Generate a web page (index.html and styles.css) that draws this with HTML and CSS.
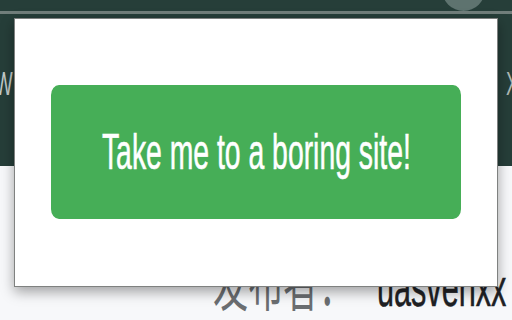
FILE: index.html
```html
<!DOCTYPE html>
<html lang="zh">
<head>
<meta charset="utf-8">
<title>Boring site</title>
<link rel="stylesheet" href="styles.css">
</head>
<body>
<div class="page">
  <header class="header">
    <div class="topbar"><span class="avatar"></span></div>
    <div class="rule"></div>
    <nav class="nav">
      <span class="nav-left">W</span>
      <span class="nav-right">X</span>
    </nav>
  </header>
  <main class="content">
    <div class="meta">
      <span class="meta-label">发布者：</span>
      <span class="meta-value">uasvenxx</span>
    </div>
  </main>
  <div class="popup">
    <button class="boring-btn"><span class="btn-text">Take me to a boring site!</span></button>
  </div>
</div>
</body>
</html>
```
FILE: styles.css
```css
html, body {
  margin: 0;
  padding: 0;
}
body {
  width: 512px;
  height: 320px;
  overflow: hidden;
  background: #f7f8fa;
  font-family: "Liberation Sans", Arial, sans-serif;
}
.page {
  position: relative;
  width: 512px;
  height: 320px;
  overflow: hidden;
}
.header {
  height: 166px;
  background: #263e39;
}
.topbar {
  height: 11px;
  display: flex;
  justify-content: flex-end;
}
.avatar {
  width: 43px;
  height: 43px;
  margin-top: -32px;
  margin-right: 27px;
  border-radius: 50%;
  background: #5e736f;
  flex: none;
}
.rule {
  height: 3px;
  background: #717e7b;
}
.nav {
  display: flex;
  margin-top: 53px;
  font-size: 33px;
  line-height: 33px;
  color: #c3cac8;
}
.nav-left {
  margin-left: -5px;
  transform: scaleX(0.567);
  transform-origin: left center;
  flex: none;
}
.nav-right {
  margin-left: auto;
  margin-right: -16px;
  width: 22px;
  transform: scaleX(0.567);
  transform-origin: left center;
  flex: none;
  color: #aeb7b4;
}
.content {
  height: 154px;
}
.meta {
  display: flex;
  align-items: baseline;
  margin-top: 82px;
  padding-left: 213px;
  white-space: nowrap;
}
.meta-label {
  flex: none;
  width: 164px;
  font-family: "Noto Sans CJK SC", "Liberation Sans", sans-serif;
  font-size: 62px;
  line-height: 62px;
  color: #6b6e71;
  transform: scaleX(0.567);
  transform-origin: left center;
}
.meta-value {
  flex: none;
  font-size: 54px;
  line-height: 54px;
  color: #202124;
  -webkit-text-stroke: 0.5px #202124;
  transform: scaleX(0.567);
  transform-origin: left center;
}
.popup {
  position: absolute;
  left: 14px;
  top: 18px;
  width: 484px;
  height: 269px;
  box-sizing: border-box;
  padding: 66px 36px 67px;
  background: #ffffff;
  border: 1px solid #7f8180;
  box-shadow: 0 5px 12px rgba(0, 0, 0, 0.35);
}
.boring-btn {
  display: flex;
  align-items: center;
  justify-content: center;
  width: 410px;
  height: 134px;
  margin: 0;
  padding: 0;
  border: none;
  border-radius: 8px / 10px;
  background: #46ae57;
  color: #ffffff;
  font-family: "Liberation Sans", Arial, sans-serif;
  font-size: 50px;
  cursor: pointer;
}
.btn-text {
  display: inline-block;
  white-space: nowrap;
  -webkit-text-stroke: 0.6px #ffffff;
  transform: scaleX(0.567);
  transform-origin: center center;
}
```
